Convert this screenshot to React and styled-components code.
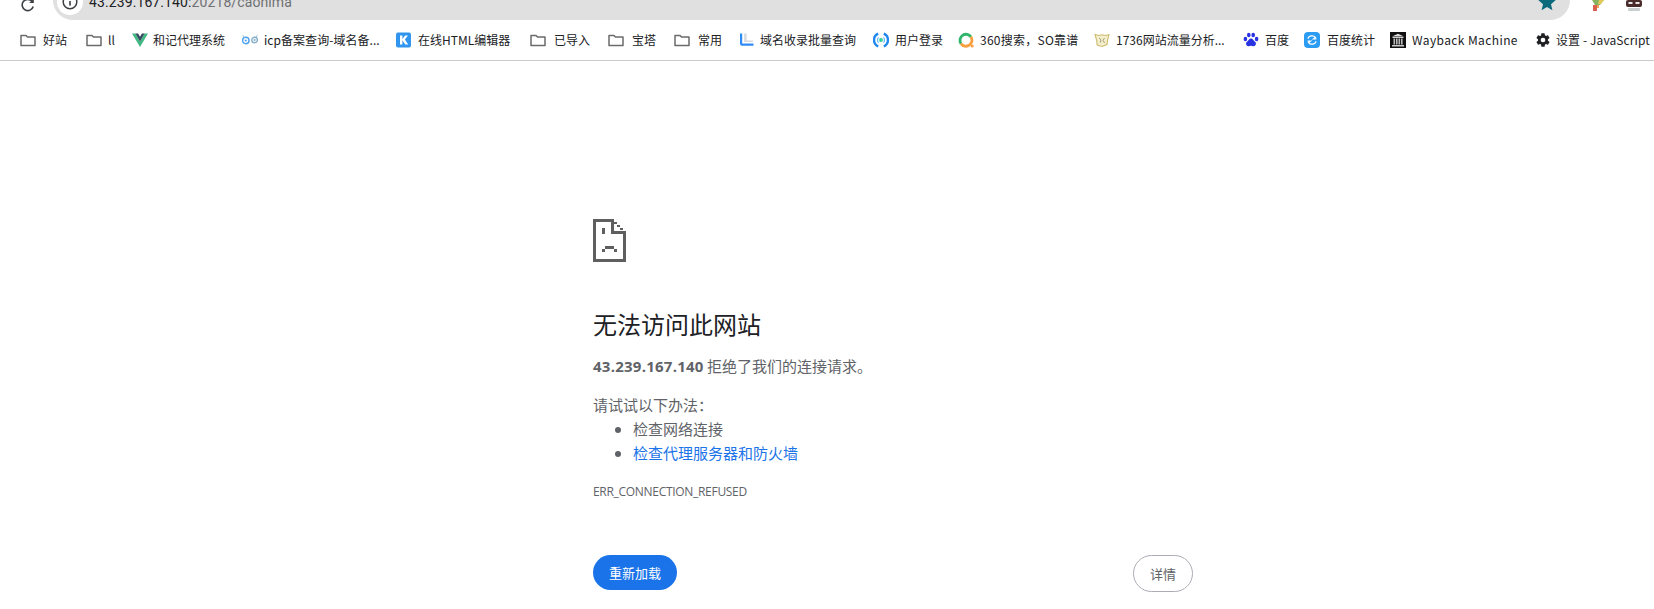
import React from "react";
import styled, { createGlobalStyle } from "styled-components";

const Global = createGlobalStyle`
  html, body { margin: 0; padding: 0; background: #fff; }
  body { font-family: "Noto Sans CJK SC", "Noto Sans", sans-serif; overflow: hidden; }
`;

const Page = styled.div`
  width: 1654px;
  height: 609px;
  overflow: hidden;
`;

const TopBar = styled.div`
  height: 20px;
  display: flex;
  align-items: flex-end;
  overflow: hidden;
`;
const Reload = styled.div`
  width: 53px;
  height: 26px;
  flex: none;
  padding-left: 20px;
  box-sizing: border-box;
`;
const Omnibox = styled.div`
  width: 1517px;
  height: 40px;
  flex: none;
  display: flex;
  align-items: center;
  background: #e0e0e0;
  border-radius: 20px;
  position: relative;
`;
const InfoBadge = styled.div`
  width: 26px;
  height: 26px;
  margin-left: 4px;
  margin-top: 4px;
  flex: none;
  display: flex;
  align-items: center;
  justify-content: center;
  background: #fff;
  border-radius: 50%;
`;
const Url = styled.div`
  margin-left: 6px;
  margin-top: 4px;
  font-family: "Roboto", sans-serif;
  font-size: 14px;
  letter-spacing: 0.1px;
  color: #202124;
  span { color: #6f7073; }
`;
const StarIcon = styled.svg`
  position: absolute;
  right: 13px;
  bottom: 8px;
`;
const Extensions = styled.div`
  flex: 1;
  display: flex;
  align-items: flex-start;
  gap: 20px;
  padding-left: 21px;
  height: 20px;
`;

const Bookmarks = styled.div`
  height: 41px;
  box-sizing: border-box;
  border-bottom: 1px solid #cbcbcb;
  padding: 0 0 1px 20px;
  display: flex;
  align-items: center;
  white-space: nowrap;
  overflow: hidden;
`;
const Bookmark = styled.div`
  width: ${(p) => p.$w}px;
  flex: none;
  display: flex;
  align-items: center;
  gap: ${(p) => p.$gap || 6}px;
  font-size: 12px;
  line-height: 16px;
  letter-spacing: ${(p) => p.$ls || 0}px;
  color: #202124;
`;

const Main = styled.main`
  width: 600px;
  margin-left: 593px;
  padding-top: 158px;
  color: #5f6368;
  font-size: 15px;
`;
const SadPage = styled.svg`
  display: block;
  margin-bottom: 46px;
`;
const Title = styled.h1`
  margin: 0;
  font-size: 24px;
  font-weight: 400;
  line-height: 32px;
  color: #202124;
`;
const Summary = styled.p`
  margin: 14px 0 0;
  line-height: 24px;
  b { font-family: "Open Sans", sans-serif; font-weight: 700; letter-spacing: 0.25px; }
`;
const TryLabel = styled.p`
  margin: 15px 0 0;
  line-height: 24px;
`;
const Tips = styled.ul`
  margin: 0;
  padding-left: 40px;
  li { line-height: 24px; }
`;
const TipLink = styled.a`
  color: #1a73e8;
  text-decoration: none;
`;
const ErrorCode = styled.div`
  margin-top: 17px;
  font-size: 12px;
  line-height: 20px;
  font-family: "Open Sans", sans-serif;
  letter-spacing: -0.3px;
`;
const Buttons = styled.div`
  margin-top: 53px;
  display: flex;
  justify-content: space-between;
  align-items: flex-start;
`;
const ReloadButton = styled.button`
  width: 84px;
  height: 35px;
  border: none;
  border-radius: 18px;
  background: #1a73e8;
  color: #fff;
  font: inherit;
  font-size: 13px;
  padding: 0;
`;
const DetailsButton = styled.button`
  width: 60px;
  height: 37px;
  border: 1px solid #aaadb3;
  border-radius: 19px;
  background: #fff;
  color: #5f6368;
  font: inherit;
  font-size: 13px;
  padding: 0;
`;

const Folder = () => (
  <svg width="16" height="16" viewBox="0 0 16 16" fill="none">
    <path d="M1 3.5h5l1.5 1.6H15v8.4H1z" stroke="#6b6b6b" strokeWidth="1.5" strokeLinejoin="round" />
  </svg>
);
const Vue = () => (
  <svg width="16" height="16" viewBox="0 0 16 16">
    <path d="M0 1.5h3.4L8 9.4l4.6-7.9H16L8 15z" fill="#41b883" />
    <path d="M3.4 1.5h2.7L8 4.8l1.9-3.3h2.7L8 9.4z" fill="#35495e" />
  </svg>
);
const Owl = () => (
  <svg width="16" height="16" viewBox="0 0 16 16" fill="none">
    <circle cx="3.8" cy="8.500" r="3.200" stroke="#4fa3ee" strokeWidth="1.500" />
    <circle cx="12.600" cy="8" r="2.800" stroke="#86b0c8" strokeWidth="1.400" />
    <circle cx="3.800" cy="8.500" r="1.100" fill="#4fa3ee" />
    <circle cx="12.600" cy="8" r="1.100" fill="#86b0c8" />
    <path d="M0.500 3.500l2 1.500M15.500 3.500l-2 1.500" stroke="#86b0c8" strokeWidth="1" />
  </svg>
);
const KLogo = () => (
  <svg width="15" height="16" viewBox="0 0 15 16">
    <rect width="15" height="15" y="0.5" rx="2" fill="#2f95ee" />
    <path d="M4 3.5h2.4v3.4l2.7-3.4H12L8.9 7.6 12.2 12.5H9.3L6.4 8.3v4.2H4z" fill="#fff" />
  </svg>
);
const LLogo = () => (
  <svg width="14" height="16" viewBox="0 0 14 16">
    <path d="M0 1.5h2.2v10H13.5v2.2H2a2 2 0 0 1-2-2z" fill="#2f8cf5" />
    <path d="M4.2 1.5h2.4v7H13v1.6H4.2z" fill="#d5d8dc" />
  </svg>
);
const LoginLogo = () => (
  <svg width="16" height="16" viewBox="0 0 16 16" fill="none">
    <path d="M5.200 1.600a7 7 0 0 0 0 12.800" stroke="#1f88ee" strokeWidth="2.400" />
    <path d="M10.800 1.600a7 7 0 0 1 0 12.800" stroke="#1f88ee" strokeWidth="2.400" />
    <path d="M5.600 5.400a3.600 3.600 0 0 0 0 5.200M10.400 5.400a3.600 3.600 0 0 1 0 5.200" stroke="#63b6f2" strokeWidth="1.200" />
    <circle cx="8" cy="8" r="1.900" fill="#2ed09a" />
  </svg>
);
const So360 = () => (
  <svg width="16" height="16" viewBox="0 0 16 16" fill="none">
    <path d="M3 11.600A5.600 5.600 0 0 1 12.900 4.900" stroke="#2fb56a" strokeWidth="2.800" />
    <path d="M12.900 4.900A5.600 5.600 0 0 1 3 11.600" stroke="#fa9f3e" strokeWidth="2.800" />
    <circle cx="14.200" cy="14" r="1.500" fill="#fa9f3e" />
  </svg>
);
const Tiger = () => (
  <svg width="16" height="16" viewBox="0 0 16 16" fill="none">
    <path d="M1 2.500l4 1 3-.8 3 .8 4-.8-1.400 5L13 12.500 8 14.500 3.200 13 2.600 8z" fill="#f4efcf" stroke="#cdbb6c" strokeWidth="1.100" />
    <path d="M5 6l2 1.600-.6 3M10.500 6L9 8.400l1.600 2.600" stroke="#a8a070" strokeWidth="1" />
  </svg>
);
const Paw = () => (
  <svg width="16" height="16" viewBox="0 0 16 16" fill="#2932e1">
    <ellipse cx="2.400" cy="7" rx="1.800" ry="2.200" />
    <ellipse cx="5.800" cy="3" rx="1.800" ry="2.300" />
    <ellipse cx="10.200" cy="3" rx="1.800" ry="2.300" />
    <ellipse cx="13.600" cy="7" rx="1.800" ry="2.200" />
    <path d="M8 6.600c2 0 2.400 2 4 3.200 1.800 1.400.8 4.600-1.600 4.400-1-.1-1.600-.5-2.400-.5s-1.400.4-2.400.5C3.200 14.400 2.200 11.200 4 9.800c1.600-1.200 2-3.200 4-3.200z" />
  </svg>
);
const Tongji = () => (
  <svg width="16" height="16" viewBox="0 0 16 16" fill="none">
    <rect width="16" height="16" rx="4" fill="#2b9cf2" />
    <path d="M4 6.800a4 3.300 0 0 1 7.400-1.400L9.600 6.800H12.400M12 9.200a4 3.300 0 0 1-7.400 1.400l1.800-1.400H3.600" stroke="#fff" strokeWidth="1.300" />
  </svg>
);
const Wayback = () => (
  <svg width="16" height="16" viewBox="0 0 16 16">
    <rect width="16" height="16" fill="#111" />
    <path d="M8 1.800l6 2.700H2z" fill="#ddd" />
    <rect x="2.500" y="5" width="11" height="1" fill="#ccc" />
    <path d="M3.500 6.500h1.600v6H3.500zM6 6.500h1.600v6H6zM8.500 6.500h1.600v6H8.500zM11 6.500h1.600v6H11z" fill="#bbb" />
    <rect x="2" y="13" width="12" height="1.500" fill="#ccc" />
  </svg>
);
const Gear = () => (
  <svg width="16" height="16" viewBox="0 0 24 24" fill="#202124">
    <path d="M19.400 13c.04-.33.06-.66.06-1s-.02-.67-.06-1l2.100-1.640c.19-.15.24-.42.12-.64l-2-3.460c-.12-.22-.39-.3-.61-.22l-2.490 1c-.52-.4-1.080-.73-1.690-.98l-.38-2.650A.49.49 0 0 0 14 2h-4c-.25 0-.46.18-.49.420l-.38 2.650c-.61.250-1.170.590-1.690.980l-2.490-1c-.23-.09-.49 0-.61.220l-2 3.460c-.13.220-.07.490.120.640L4.570 11c-.04.330-.07.670-.07 1s.03.670.07 1l-2.110 1.640c-.19.150-.24.420-.12.640l2 3.460c.12.220.39.300.61.220l2.490-1c.52.400 1.080.730 1.690.980l.38 2.650c.03.240.24.420.49.420h4c.25 0 .46-.18.49-.42l.38-2.650c.61-.25 1.170-.59 1.690-.98l2.490 1c.23.090.49 0 .61-.22l2-3.460c.12-.22.070-.49-.12-.64zM12 15.500a3.500 3.500 0 1 1 0-7 3.500 3.500 0 0 1 0 7z" />
  </svg>
);

const bookmarks = [
  { w: 66, icon: <Folder />, text: "好站", gap: 7 },
  { w: 46, icon: <Folder />, text: "ll" },
  { w: 110, icon: <Vue />, text: "和记代理系统", gap: 5 },
  { w: 154, icon: <Owl />, text: "icp备案查询-域名备...", ls: 0.05 },
  { w: 134, icon: <KLogo />, text: "在线HTML编辑器", gap: 7 },
  { w: 78, icon: <Folder />, text: "已导入", gap: 8 },
  { w: 66, icon: <Folder />, text: "宝塔", gap: 8 },
  { w: 66, icon: <Folder />, text: "常用", gap: 8 },
  { w: 133, icon: <LLogo />, text: "域名收录批量查询", gap: 6 },
  { w: 85, icon: <LoginLogo />, text: "用户登录", gap: 6 },
  { w: 136, icon: <So360 />, text: "360搜索，SO靠谱", gap: 6, ls: 0.25 },
  { w: 149, icon: <Tiger />, text: "1736网站流量分析...", gap: 6 },
  { w: 61, icon: <Paw />, text: "百度", gap: 6 },
  { w: 86, icon: <Tongji />, text: "百度统计", gap: 7 },
  { w: 145, icon: <Wayback />, text: "Wayback Machine", gap: 6, ls: 0.4 },
  { w: 130, icon: <Gear />, text: "设置 - JavaScript", gap: 5, ls: 0.1 },
];

function App() {
  return (
    <Page>
      <Global />
      <TopBar>
        <Reload>
          <svg width="16" height="16" viewBox="0 0 16 16" fill="none">
            <path d="M13.200 9.500A5.600 5.600 0 1 1 12 4.300" stroke="#3c4043" strokeWidth="1.600" />
            <path d="M13.800 1.500v4.600H9.200z" fill="#3c4043" />
          </svg>
        </Reload>
        <Omnibox>
          <InfoBadge>
            <svg width="16" height="16" viewBox="0 0 16 16" fill="none">
              <circle cx="8" cy="8" r="6.800" stroke="#3c4043" strokeWidth="1.500" />
              <rect x="7.200" y="7" width="1.600" height="4.600" fill="#3c4043" />
              <rect x="7.200" y="4.300" width="1.600" height="1.600" fill="#3c4043" />
            </svg>
          </InfoBadge>
          <Url>
            43.239.167.140:<span>20218/caonima</span>
          </Url>
          <StarIcon width="20" height="20" viewBox="0 0 24 24" fill="#0b6b7d">
            <path d="M12 2l3 6.900 7.500.7-5.700 5 1.700 7.400L12 18.100 5.500 22l1.700-7.400-5.700-5 7.500-.7z" />
          </StarIcon>
        </Omnibox>
        <Extensions>
          <svg width="14" height="11" viewBox="0 0 14 11">
            <path d="M1 0l3 5 5 0 4-5z" fill="#86b35f" />
            <path d="M8 0l5 0-3 4H7z" fill="#e3c95a" />
            <rect x="2" y="5" width="4" height="6" fill="#d9604c" />
            <rect x="6" y="5" width="2" height="3" fill="#e9a25a" />
          </svg>
          <svg width="18" height="12" viewBox="0 0 18 12">
            <rect x="1" y="0" width="16" height="7" rx="2" fill="#4a2b2b" />
            <rect x="3.500" y="2" width="4" height="2" fill="#e8e8e8" />
            <rect x="10.500" y="2" width="4" height="2" fill="#e8e8e8" />
            <rect x="3" y="8" width="12" height="3" rx="1" fill="#c9cfcf" />
          </svg>
        </Extensions>
      </TopBar>
      <Bookmarks>
        {bookmarks.map((b, i) => (
          <Bookmark key={i} $w={b.w} $gap={b.gap} $ls={b.ls}>
            {b.icon}
            <span>{b.text}</span>
          </Bookmark>
        ))}
      </Bookmarks>
      <Main>
        <SadPage width="33" height="43" viewBox="0 0 33 43" shapeRendering="crispEdges" fill="#5f5f5f">
          <path d="M0 0h21v3h3v3h3v3h3v3h3v31H0zM3 3v37h27V15H18V3zM21 3v9h9v-1h-3V8h-3V5h-3z" fillRule="evenodd" />
          <rect x="9" y="9" width="3" height="6" />
          <rect x="9" y="30" width="3" height="3" />
          <rect x="12" y="27" width="9" height="3" />
          <rect x="21" y="30" width="3" height="3" />
        </SadPage>
        <Title>无法访问此网站</Title>
        <Summary>
          <b>43.239.167.140</b> 拒绝了我们的连接请求。
        </Summary>
        <TryLabel>请试试以下办法：</TryLabel>
        <Tips>
          <li>检查网络连接</li>
          <li>
            <TipLink href="#">检查代理服务器和防火墙</TipLink>
          </li>
        </Tips>
        <ErrorCode>ERR_CONNECTION_REFUSED</ErrorCode>
        <Buttons>
          <ReloadButton>重新加载</ReloadButton>
          <DetailsButton>详情</DetailsButton>
        </Buttons>
      </Main>
    </Page>
  );
}

export default App;
